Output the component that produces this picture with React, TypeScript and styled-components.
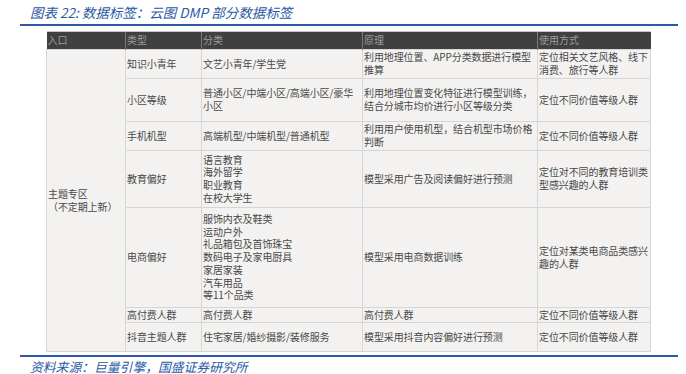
import React from 'react'
import styled, { createGlobalStyle } from 'styled-components'

const GlobalStyle = createGlobalStyle`
  html, body {
    margin: 0;
    padding: 0;
    background: #fff;
  }
  body {
    font-family: "Noto Sans CJK SC", "Noto Sans", sans-serif;
  }
`

const Page = styled.div`
  width: 686px;
  height: 374px;
  overflow: hidden;
  background: #fff;
`

const Title = styled.div`
  height: 24px;
  padding-left: 30px;
  line-height: 24px;
  font-size: 13.5px;
  font-style: italic;
  color: #2a58a4;
  white-space: nowrap;
`

const Rule = styled.div`
  height: 2px;
  margin: 0 8px 0 20px;
  background: #2c5aa6;
`

const Table = styled.table`
  margin: 5px 0 3px 46px;
  width: 604px;
  table-layout: fixed;
  border-collapse: collapse;
  font-size: 10px;
  line-height: 12.7px;
  color: #484848;
`

const HeadCell = styled.th`
  height: 17px;
  padding: 0 1px;
  background: #404040;
  color: #9c9c9c;
  font-weight: 400;
  text-align: left;
  white-space: nowrap;
  border-left: 1px solid #7a7a7a;
  border-top: 1px solid #c8c8c8;
  &:first-child {
    border-left: none;
  }
`

const Row = styled.tr<{ $h: number }>`
  height: ${({ $h }) => $h}px;
`

const Cell = styled.td`
  padding: 0 1px;
  background: #f3f2f1;
  border: 1px solid #d6d6d6;
  vertical-align: middle;
  white-space: pre;
  overflow: hidden;
  letter-spacing: -0.1px;
`

const Caption = styled.div`
  margin-top: 2px;
  padding-left: 30px;
  line-height: 15px;
  font-size: 12.8px;
  font-style: italic;
  color: #2a58a4;
  white-space: nowrap;
`

type RowData = { h: number; type: string; cat: string; how: string; use: string }

const rows: RowData[] = [
  { h: 29, type: '知识小青年', cat: '文艺小青年/学生党', how: '利用地理位置、APP分类数据进行模型\n推算', use: '定位相关文艺风格、线下\n消费、旅行等人群' },
  { h: 43, type: '小区等级', cat: '普通小区/中端小区/高端小区/豪华\n小区', how: '利用地理位置变化特征进行模型训练，\n结合分城市均价进行小区等级分类', use: '定位不同价值等级人群' },
  { h: 29, type: '手机机型', cat: '高端机型/中端机型/普通机型', how: '利用用户使用机型，结合机型市场价格\n判断', use: '定位不同价值等级人群' },
  { h: 57, type: '教育偏好', cat: '语言教育\n海外留学\n职业教育\n在校大学生', how: '模型采用广告及阅读偏好进行预测', use: '定位对不同的教育培训类\n型感兴趣的人群' },
  { h: 100, type: '电商偏好', cat: '服饰内衣及鞋类\n运动户外\n礼品箱包及首饰珠宝\n数码电子及家电厨具\n家居家装\n汽车用品\n等11个品类', how: '模型采用电商数据训练', use: '定位对某类电商品类感兴\n趣的人群' },
  { h: 15, type: '高付费人群', cat: '高付费人群', how: '高付费人群', use: '定位不同价值等级人群' },
  { h: 29, type: '抖音主题人群', cat: '住宅家居/婚纱摄影/装修服务', how: '模型采用抖音内容偏好进行预测', use: '定位不同价值等级人群' },
]

const widths = [79, 76, 161, 175, 113]
const heads = ['入口', '类型', '分类', '原理', '使用方式']

export default function App() {
  return (
    <Page>
      <GlobalStyle />
      <Title>图表 22: 数据标签：云图 DMP 部分数据标签</Title>
      <Rule />
      <Table>
        <colgroup>
          {widths.map((w, i) => (
            <col key={i} style={{ width: w }} />
          ))}
        </colgroup>
        <thead>
          <tr>
            {heads.map((h) => (
              <HeadCell key={h}>{h}</HeadCell>
            ))}
          </tr>
        </thead>
        <tbody>
          {rows.map((r, i) => (
            <Row key={r.type} $h={r.h}>
              {i === 0 && <Cell rowSpan={rows.length}>{'主题专区\n（不定期上新）'}</Cell>}
              <Cell>{r.type}</Cell>
              <Cell>{r.cat}</Cell>
              <Cell>{r.how}</Cell>
              <Cell>{r.use}</Cell>
            </Row>
          ))}
        </tbody>
      </Table>
      <Rule />
      <Caption>资料来源：巨量引擎，国盛证券研究所</Caption>
    </Page>
  )
}
